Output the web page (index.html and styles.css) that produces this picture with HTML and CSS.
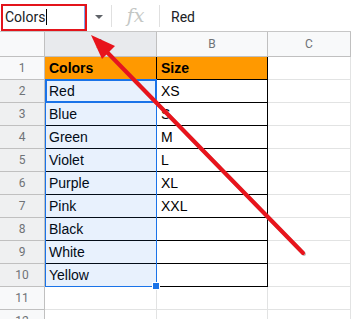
FILE: index.html
```html
<!DOCTYPE html>
<html lang="en">
<head>
    <meta charset="UTF-8">
    <title>Name box</title>
    <link rel="stylesheet" href="styles.css">
</head>
<body>
    <div class="sheet">
        <div class="toolbar">
            <div class="name-box"><span>Colors</span><i class="caret"></i></div>
            <div class="drop"></div>
            <div class="sep"></div>
            <div class="fx">fx</div>
            <div class="sep"></div>
            <div class="formula">Red</div>
        </div>

        <div class="grid">
            <div class="corner"></div>
            <div class="colhead sel">A</div>
            <div class="colhead">B</div>
            <div class="colhead">C</div>

            <div class="rowhead">1</div>
            <div class="cell tbl head">Colors</div>
            <div class="cell tbl head">Size</div>
            <div class="cell"></div>

            <div class="rowhead on">2</div>
            <div class="cell tbl">Red</div>
            <div class="cell tbl">XS</div>
            <div class="cell"></div>

            <div class="rowhead on">3</div>
            <div class="cell tbl">Blue</div>
            <div class="cell tbl">S</div>
            <div class="cell"></div>

            <div class="rowhead on">4</div>
            <div class="cell tbl">Green</div>
            <div class="cell tbl">M</div>
            <div class="cell"></div>

            <div class="rowhead on">5</div>
            <div class="cell tbl">Violet</div>
            <div class="cell tbl">L</div>
            <div class="cell"></div>

            <div class="rowhead on">6</div>
            <div class="cell tbl">Purple</div>
            <div class="cell tbl">XL</div>
            <div class="cell"></div>

            <div class="rowhead on">7</div>
            <div class="cell tbl">Pink</div>
            <div class="cell tbl">XXL</div>
            <div class="cell"></div>

            <div class="rowhead on">8</div>
            <div class="cell tbl">Black</div>
            <div class="cell tbl"></div>
            <div class="cell"></div>

            <div class="rowhead on">9</div>
            <div class="cell tbl">White</div>
            <div class="cell tbl"></div>
            <div class="cell"></div>

            <div class="rowhead on">10</div>
            <div class="cell tbl">Yellow</div>
            <div class="cell tbl"></div>
            <div class="cell"></div>

            <div class="rowhead">11</div>
            <div class="cell"></div>
            <div class="cell"></div>
            <div class="cell"></div>

            <div class="rowhead">12</div>
            <div class="cell"></div>
            <div class="cell"></div>
            <div class="cell"></div>

            <!-- selected range A2:A10, drawn over the cells -->
            <div class="selection"><div class="handle"></div></div>
            <div class="active"></div>
        </div>

        <svg class="arrow" width="351" height="319" viewBox="0 0 351 319">
            <line x1="304" y1="254" x2="104" y2="49" stroke="#9a9a9a" stroke-width="4" stroke-linecap="round" opacity="0.6"/>
            <line x1="303" y1="253" x2="103" y2="48" stroke="#e8141c" stroke-width="4" stroke-linecap="round"/>
            <polygon points="91,35 115,46 102,59" fill="#e8141c"/>
        </svg>
    </div>
</body>
</html>
```

FILE: styles.css
```css
body {
    margin: 0;
    background: #fff;
    font-family: Roboto, "Liberation Sans", Arial, sans-serif;
    color: #202124;
}
.sheet {
    position: relative;
    width: 351px;
    height: 319px;
    overflow: hidden;
}
.toolbar {
    height: 31px;
    border-bottom: 1px solid #c7c7c7;
    display: flex;
    align-items: center;
}
.name-box {
    box-sizing: border-box;
    margin: 3px 0 0 1px;
    width: 86px;
    height: 27px;
    border: 2px solid #e3141b;
    display: flex;
    align-items: center;
    padding-left: 2px;
    font-size: 14px;
    position: relative;
}
.name-box .caret {
    width: 1px;
    height: 16px;
    background: #000;
    margin-left: 1px;
}
.name-box::after {
    content: "";
    position: absolute;
    right: 0;
    top: 0;
    bottom: 0;
    width: 1px;
    background: #7aa7ef;
}
.drop {
    margin-left: 8px;
    width: 0;
    height: 0;
    border-left: 4px solid transparent;
    border-right: 4px solid transparent;
    border-top: 4px solid #5f6368;
    margin-top: 3px;
}
.sep {
    width: 1px;
    height: 22px;
    background: #e0e0e0;
}
.drop + .sep {
    margin-left: 8px;
}
.fx {
    width: 47px;
    text-align: center;
    font-family: "DejaVu Serif", "Liberation Serif", serif;
    font-style: italic;
    font-size: 19px;
    color: #c4c7c5;
    margin-top: -2px;
}
.formula {
    padding-left: 11px;
    font-size: 14px;
    padding-top: 2px;
}
.grid {
    position: relative;
    display: grid;
    grid-template-columns: 45px 112px 111px 83px;
    grid-template-rows: 25px repeat(12, 23px);
}
.corner,
.colhead,
.rowhead,
.cell {
    box-sizing: border-box;
    border-right: 1px solid #e2e3e3;
    border-bottom: 1px solid #e2e3e3;
}
.corner {
    background: #f8f9fa;
    border-right: 1px solid #c0c0c0;
    border-bottom: 1px solid #c0c0c0;
}
.colhead {
    background: #f8f9fa;
    border-right-color: #c0c0c0;
    border-bottom-color: #c0c0c0;
    font-size: 12px;
    color: #6f7377;
    display: flex;
    align-items: center;
    justify-content: center;
}
.colhead.sel {
    background: #e8eaed;
}
.rowhead {
    background: #f8f9fa;
    border-right-color: #c0c0c0;
    border-bottom-color: #c0c0c0;
    font-size: 12px;
    color: #6f7377;
    display: flex;
    align-items: center;
    justify-content: center;
}
.rowhead.on {
    background: #eff0f1;
}
.cell {
    font-family: "Liberation Sans", Arial, sans-serif;
    font-size: 14px;
    color: #000;
    padding: 0 0 3px 4px;
    display: flex;
    align-items: flex-end;
}
.cell.tbl {
    border-right-color: #000;
    border-bottom-color: #000;
}
.cell.head {
    background: #ff9900;
    font-weight: bold;
}
.selection {
    position: absolute;
    grid-column: 2 / 3;
    grid-row: 3 / 12;
    top: -1px;
    left: 0;
    right: 0;
    bottom: 0;
    border: 1px solid #1a73e8;
    background: rgba(26, 115, 232, 0.1);
    pointer-events: none;
}
.handle {
    position: absolute;
    right: -4px;
    bottom: -4px;
    width: 6px;
    height: 6px;
    background: #1a73e8;
    border: 1px solid #fff;
}
.active {
    position: absolute;
    grid-column: 2 / 3;
    grid-row: 3 / 4;
    top: -1px;
    left: 0;
    right: 0;
    bottom: 0;
    border: 2px solid #1a73e8;
    pointer-events: none;
}
.arrow {
    position: absolute;
    left: 0;
    top: 0;
}
```
